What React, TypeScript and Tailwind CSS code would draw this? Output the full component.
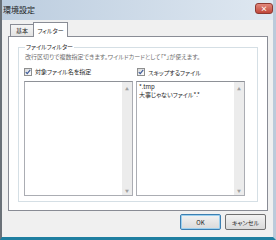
import React from "react";

const Check = ({ label }: { label: string }) => (
  <label className="flex items-center gap-[3px]">
    <span className="flex h-[8px] w-[8px] items-center justify-center border border-[#8e8f8f] bg-gradient-to-br from-[#d8d8d8] to-white">
      <svg viewBox="0 0 8 8" className="h-[6px] w-[6px]">
        <path d="M1 4.2 L3 6.2 L7 1.2" fill="none" stroke="#3b5998" strokeWidth="1.5" />
      </svg>
    </span>
    <span className="text-[#1e1e1e]">{label}</span>
  </label>
);

const ListBox = ({ lines }: { lines: string[] }) => (
  <div className="flex h-[115px] w-[109px] border border-[#abadb3] border-t-[#8e9197] bg-white">
    <div className="flex-1 px-[2px] pt-[1px] leading-[8px] text-[#1e1e1e]">
      {lines.map((l) => (
        <div key={l}>{l}</div>
      ))}
    </div>
    <div className="flex w-[10px] flex-col items-center justify-between bg-[#ececec] pt-[4px] pb-[1px] text-[4px] leading-[6px] text-[#a0a0a0]">
      <span>▲</span>
      <span>▼</span>
    </div>
  </div>
);

const App = () => {
  return (
    <div className="flex h-[240px] w-[276px] flex-col overflow-hidden border-l-[2px] border-r-[3px] border-b-[3px] border-l-[#6a7178] border-r-[#bccbdb] border-b-[#1f7fa0] font-['Noto_Sans_CJK_JP',sans-serif] text-[6px] [font-feature-settings:'palt']">
      {/* title bar */}
      <div className="flex h-[20px] items-center justify-between bg-gradient-to-r from-[#bccddf] to-[#dfe8f1] pl-[1px]">
        <span className="text-[8px] text-[#1e1e1e]">環境設定</span>
        <button
          type="button"
          className="mb-[4px] flex h-[11px] w-[18px] items-center justify-center rounded-[3px] border border-[#8e3a32] bg-gradient-to-b from-[#e2887c] to-[#c0463a] text-[7px] font-bold leading-none text-white"
        >
          ×
        </button>
      </div>

      {/* client */}
      <div className="flex flex-1 flex-col bg-[#f0f0f0] pl-[6px] pt-[2px]">
        <div className="flex h-[14px] items-end pl-[2px]">
          <div className="flex h-[12px] w-[24px] items-center justify-center border border-b-0 border-[#898c95] bg-gradient-to-b from-[#f5f5f5] to-[#e3e3e3] text-[#1e1e1e]">
            基本
          </div>
          <div className="relative z-10 -mb-px -ml-px flex h-[15px] w-[35px] items-center justify-center border border-b-0 border-[#898c95] bg-white text-[#1e1e1e]">
            フィルター
          </div>
        </div>
        <div className="h-[175px] w-[260px] border border-[#898c95] bg-white pl-[9px] pt-[6px]">
          <fieldset className="h-[159px] w-[240px] border border-[#d5dfe5] pl-[5px]">
            <legend className="ml-[1px] px-[1px] leading-[8px] text-[#1e1e1e]">ファイルフィルター</legend>
            <div className="ml-[1px] mt-[1px] leading-[9px] text-[#6d6d6d]">
              改行区切りで複数指定できます。ワイルドカードとして「*」が使えます。
            </div>
            <div className="mt-[6px] flex h-[10px]">
              <div className="w-[113px]">
                <Check label="対象ファイル名を指定" />
              </div>
              <Check label="スキップするファイル" />
            </div>
            <div className="mt-[4px] flex gap-[3px]">
              <ListBox lines={[]} />
              <ListBox lines={["*.tmp", "大事じゃないファイル*.*"]} />
            </div>
          </fieldset>
        </div>
        <div className="mt-[3px] flex justify-end gap-[4px] pr-[7px]">
          <button
            type="button"
            className="h-[16px] w-[41px] rounded-[2px] border border-[#3c7fb1] bg-gradient-to-b from-[#f2f2f2] to-[#dadada] text-[6px] text-[#1e1e1e] shadow-[inset_0_0_0_1px_#9cd0ef]"
          >
            OK
          </button>
          <button
            type="button"
            className="h-[16px] w-[41px] rounded-[2px] border border-[#707070] bg-gradient-to-b from-[#f2f2f2] to-[#dadada] text-[6px] text-[#1e1e1e]"
          >
            キャンセル
          </button>
        </div>
      </div>
    </div>
  );
};

export default App;
